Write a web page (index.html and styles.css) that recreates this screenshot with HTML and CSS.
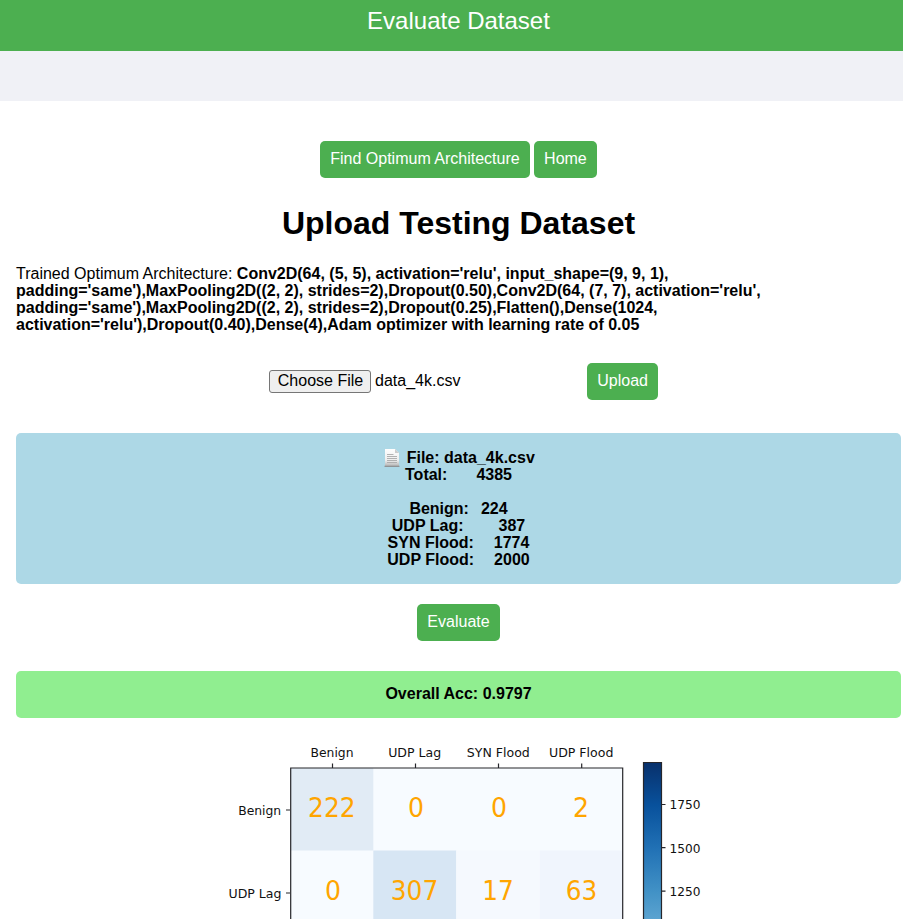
FILE: index.html
```html
<!DOCTYPE html>
<html lang="en">
<head>
<meta charset="utf-8">
<title>Evaluate Dataset</title>
<link rel="stylesheet" href="styles.css">
</head>
<body>
<header class="banner">Evaluate Dataset</header>
<div class="strip"></div>
<main class="content">
  <nav class="nav"><a class="btn">Find Optimum Architecture</a><a class="btn">Home</a></nav>
  <h1 class="title">Upload Testing Dataset</h1>
  <p class="arch">Trained Optimum Architecture: <b>Conv2D(64, (5, 5), activation='relu', input_shape=(9, 9, 1),<br>padding='same'),MaxPooling2D((2, 2), strides=2),Dropout(0.50),Conv2D(64, (7, 7), activation='relu',<br>padding='same'),MaxPooling2D((2, 2), strides=2),Dropout(0.25),Flatten(),Dense(1024,<br>activation='relu'),Dropout(0.40),Dense(4),Adam optimizer with learning rate of 0.05</b></p>
  <div class="upload">
    <div class="picker"><span class="choose">Choose File</span><span class="chosen">data_4k.csv</span></div>
    <a class="btn">Upload</a>
  </div>
  <section class="summary">
    <div class="row file"><svg class="doc" width="16" height="18" viewBox="0 0 16 18"><defs><linearGradient id="paper" x2="0" y2="1"><stop offset="0" stop-color="#fff"/><stop offset=".65" stop-color="#eee"/><stop offset="1" stop-color="#b0b0b0"/></linearGradient></defs><path d="M1 0h10l4 4v13.500H1z" fill="url(#paper)"/><path d="M11 0v4h4z" fill="#ccc"/><path d="M3 5.500h6.500M3 7.500h10M3 9.500h10M3 11.500h10M3 13.500h10" stroke="#aaa" stroke-width=".9"/><path d="M.5 17.300h15" stroke="#888"/></svg><span>File: data_4k.csv</span></div>
    <div class="row total"><span>Total:</span><span>4385</span></div>
    <div class="row gap"></div>
    <div class="row benign"><span>Benign:</span><span>224</span></div>
    <div class="row lag"><span>UDP Lag:</span><span>387</span></div>
    <div class="row flood"><span>SYN Flood:</span><span>1774</span></div>
    <div class="row flood"><span>UDP Flood:</span><span>2000</span></div>
  </section>
  <div class="action"><a class="btn">Evaluate</a></div>
  <section class="accuracy">Overall Acc: 0.9797</section>
  <svg class="matrix" width="500" height="201" viewBox="220 718 500 201">
    <defs><linearGradient id="blues" gradientUnits="userSpaceOnUse" x1="0" y1="762" x2="0" y2="919"><stop offset="0" stop-color="#08306b"/><stop offset=".275" stop-color="#08519c"/><stop offset=".55" stop-color="#2171b5"/><stop offset=".83" stop-color="#4292c6"/><stop offset="1" stop-color="#5ba3d0"/></linearGradient></defs>
    <path fill="#f7fbff" d="M291 768h332v160H291z"/>
    <path fill="#e1ebf5" d="M291 768h82.300v82.500H291z"/>
    <path fill="#d7e6f4" d="M373.300 850.500h83v80h-83z"/>
    <path fill="#f5f9fe" d="M456.300 850.500h83.500v80h-83.500z"/>
    <path fill="#f0f5fd" d="M539.800 850.500H623v80h-83.200z"/>
    <path class="axis" d="M290.700 925V768H622.700V925M332.500 768v-4.500M415.500 768v-4.500M498.500 768v-4.500M581.700 768v-4.500M290 810h-4M290 893h-4"/>
    <path fill="url(#blues)" d="M643.500 762.500h18V925h-18z"/>
    <path class="axis" d="M643.500 925V762.500h18V925M661.500 804.500h4M661.500 847.700h4M661.500 891.200h4"/>
    <g class="label">
      <text x="332" y="757" textLength="43" lengthAdjust="spacingAndGlyphs">Benign</text><text x="414.700" y="757" textLength="53" lengthAdjust="spacingAndGlyphs">UDP Lag</text><text x="498.300" y="757" textLength="63" lengthAdjust="spacingAndGlyphs">SYN Flood</text><text x="581.200" y="757" textLength="64.500" lengthAdjust="spacingAndGlyphs">UDP Flood</text>
      <text x="259.700" y="815.300" textLength="43" lengthAdjust="spacingAndGlyphs">Benign</text><text x="255" y="898.300" textLength="53" lengthAdjust="spacingAndGlyphs">UDP Lag</text>
      <text x="685" y="809" textLength="31" lengthAdjust="spacingAndGlyphs">1750</text><text x="685" y="853" textLength="31" lengthAdjust="spacingAndGlyphs">1500</text><text x="685" y="896" textLength="31" lengthAdjust="spacingAndGlyphs">1250</text>
    </g>
    <g class="value">
      <text x="331.800" y="816.700" textLength="47.500" lengthAdjust="spacingAndGlyphs">222</text><text x="416" y="816.700" textLength="16" lengthAdjust="spacingAndGlyphs">0</text><text x="499" y="816.700" textLength="16" lengthAdjust="spacingAndGlyphs">0</text><text x="581" y="816.700" textLength="16" lengthAdjust="spacingAndGlyphs">2</text>
      <text x="333" y="899.700" textLength="16" lengthAdjust="spacingAndGlyphs">0</text><text x="414.500" y="899.700" textLength="47.500" lengthAdjust="spacingAndGlyphs">307</text><text x="498" y="899.700" textLength="31.500" lengthAdjust="spacingAndGlyphs">17</text><text x="581.500" y="899.700" textLength="31.500" lengthAdjust="spacingAndGlyphs">63</text>
    </g>
  </svg>
</main>
</body>
</html>
```
FILE: styles.css
```css
* { box-sizing: border-box; }
body { margin: 0; height: 919px; overflow: hidden; background: #fff; color: #000; font: 16px/17px "Liberation Sans", Arial, sans-serif; }
.banner { height: 51px; padding: 7px 0 0 14px; background: #4caf50; color: #fff; font-size: 24px; line-height: 28px; text-align: center; }
.strip { height: 50px; background: #f0f1f6; }
.content { width: 885px; margin-left: 16px; padding-top: 40px; }
.nav, .action { display: flex; justify-content: center; gap: 4.45px; }
.btn { height: 37px; padding: 9px 10px 10px; border-radius: 5px; background: #4caf50; color: #fff; line-height: 18px; }
.title { margin: 27px 0 23px; font-size: 32px; line-height: 37px; text-align: center; }
.arch { margin: 0; white-space: nowrap; }
.upload { display: flex; align-items: center; justify-content: space-between; width: 389px; margin: 30px 0 0 253px; }
.picker { display: flex; align-items: center; gap: 4px; }
.choose { width: 102px; height: 23px; padding-left: 1px; border: 1px solid #767676; border-radius: 3px; background: #efefef; line-height: 20px; text-align: center; }
.chosen { padding-bottom: 2px; }
.summary { height: 151px; margin: 33px 0 20px; padding-top: 16px; border-radius: 5px; background: #add8e6; font-weight: bold; }
.row { display: flex; justify-content: center; height: 17px; white-space: nowrap; }
.file { gap: 6.3px; padding-left: 2.2px; }
.doc { flex: none; }
.total { gap: 29px; }
.benign { gap: 12px; }
.lag { gap: 35px; }
.flood { gap: 20px; }
.accuracy { height: 47px; margin-top: 30px; padding-top: 14px; border-radius: 5px; background: #90ee90; font-weight: bold; text-align: center; }
.matrix { display: block; margin-left: 204px; }
.axis { fill: none; stroke: #26262b; stroke-width: 1.2; }
.label, .value { font-family: "DejaVu Sans", sans-serif; text-anchor: middle; }
.label { font-size: 13px; fill: #111; }
.value { font-size: 26px; fill: #ffa500; }
```
